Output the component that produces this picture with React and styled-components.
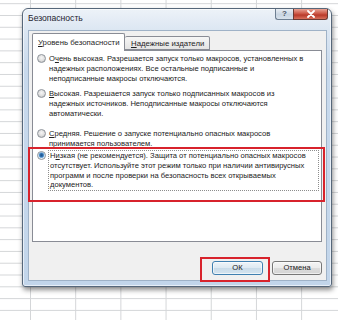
import React from "react";
import styled, { createGlobalStyle } from "styled-components";

const GlobalStyle = createGlobalStyle`
  html, body {
    margin: 0;
    padding: 0;
    overflow: hidden;
  }
  body {
    font-family: "Liberation Sans", Arial, sans-serif;
    color: #1f1f1f;
  }
`;

const options = [
  {
    key: "veryhigh",
    mt: 3,
    lines: [
      [["О"], ["ч", true], ["ень высокая. Разрешается запуск только макросов, установленных в"]],
      [["надежных расположениях. Все остальные подписанные и"]],
      [["неподписанные макросы отключаются."]],
    ],
  },
  {
    key: "high",
    mt: 5.7,
    lines: [
      [["В", true], ["ысокая. Разрешается запуск только подписанных макросов из"]],
      [["надежных источников. Неподписанные макросы отключаются"]],
      [["автоматически."]],
    ],
  },
  {
    key: "medium",
    mt: 10.6,
    lines: [
      [["С", true], ["редняя. Решение о запуске потенциально опасных макросов"]],
      [["принимается пользователем."]],
    ],
  },
  {
    key: "low",
    mt: 1.3,
    checked: true,
    marked: true,
    lines: [
      [["Н"], ["и", true], ["зкая (не рекомендуется). Защита от потенциально опасных макросов"]],
      [["отсутствует. Используйте этот режим только при наличии антивирусных"]],
      [["программ и после проверки на безопасность всех открываемых"]],
      [["документов."]],
    ],
  },
];

const App = () => {
  return (
    <Page>
      <GlobalStyle />
      <Dialog>
        <TitleBar>
          <Title>Безопасность</Title>
          <Controls>
            <HelpButton>?</HelpButton>
            <CloseButton>
              <svg width="10" height="8" viewBox="0 0 10 8">
                <path
                  d="M2 1 L8 7 M8 1 L2 7"
                  stroke="#fff"
                  strokeWidth="1.8"
                  strokeLinecap="round"
                />
              </svg>
            </CloseButton>
          </Controls>
        </TitleBar>
        <Client>
          <TabRow>
            <Tab $active>
              <u>У</u>ровень безопасности
            </Tab>
            <Tab>
              <u>Н</u>адежные издатели
            </Tab>
          </TabRow>
          <Panel>
            {options.map((opt) => (
              <Option key={opt.key} $mt={opt.mt}>
                <Radio $checked={opt.checked} />
                <Label $focused={opt.checked}>
                  {opt.lines.map((line, i) => (
                    <Line key={i}>
                      {line.map(([t, u], j) => (u ? <u key={j}>{t}</u> : <span key={j}>{t}</span>))}
                    </Line>
                  ))}
                </Label>
                {opt.marked && <Mark />}
              </Option>
            ))}
          </Panel>
          <ButtonRow>
            <Marked>
              <Button $default>ОК</Button>
              <ButtonMark />
            </Marked>
            <Button>Отмена</Button>
          </ButtonRow>
        </Client>
      </Dialog>
    </Page>
  );
};

const Page = styled.div`
  width: 338px;
  height: 320px;
  box-sizing: border-box;
  padding: 8px 0 0 22px;
  background-color: #fff;
  background-image: linear-gradient(to right, #d4d6d8 1px, transparent 1px),
    linear-gradient(to bottom, #d4d6d8 1px, transparent 1px);
  background-size: 45.2px 11.8px;
  background-position: 30px 3.2px;
`;

const Dialog = styled.div`
  width: 310px;
  height: 279px;
  box-sizing: border-box;
  display: flex;
  flex-direction: column;
  border: 1px solid #56677a;
  border-radius: 6px 6px 3px 3px;
  padding: 0 4px 5px 5px;
  background: linear-gradient(to bottom, #edf2f8 0px, #dbe6f2 22px, #c8d9ec 60px, #c2d5ea 100%);
  box-shadow: 1px 3px 5px rgba(0, 0, 0, 0.45), inset 0 0 0 1px rgba(255, 255, 255, 0.6);
`;

const TitleBar = styled.div`
  height: 21px;
  display: flex;
  align-items: flex-start;
  justify-content: space-between;
`;

const Title = styled.div`
  font-size: 8.6px;
  line-height: 9px;
  margin-top: 5px;
  color: #1e2530;
`;

const Controls = styled.div`
  display: flex;
  margin-right: -1px;
`;

const HelpButton = styled.div`
  width: 18px;
  height: 11px;
  box-sizing: border-box;
  border: 1px solid #6e7f92;
  border-top: none;
  border-right: none;
  border-radius: 0 0 0 3px;
  background: linear-gradient(to bottom, #e9eef4, #c9d5e2 55%, #d8e2ec);
  font-size: 8px;
  line-height: 10px;
  text-align: center;
  color: #4a5564;
  font-weight: bold;
`;

const CloseButton = styled.div`
  width: 35px;
  height: 11px;
  box-sizing: border-box;
  border: 1px solid #6b3a34;
  border-top: none;
  border-radius: 0 0 3px 0;
  background: linear-gradient(to bottom, #e9a495, #c9503f 50%, #b8392a 60%, #d8705c);
  display: flex;
  align-items: center;
  justify-content: center;
`;

const Client = styled.div`
  flex: 1;
  display: flex;
  flex-direction: column;
  background: #f0f0f0;
  border: 1px solid #9fb2c7;
  box-sizing: border-box;
  padding: 2px 4px 0 3px;
`;

const TabRow = styled.div`
  display: flex;
  align-items: flex-end;
  height: 17px;
`;

const Tab = styled.div`
  height: ${(p) => (p.$active ? 18 : 14)}px;
  box-sizing: border-box;
  border: 1px solid #898c95;
  border-bottom: ${(p) => (p.$active ? "none" : "1px solid #898c95")};
  border-left: ${(p) => (p.$active ? "1px solid #898c95" : "none")};
  border-radius: 2px 2px 0 0;
  background: ${(p) =>
    p.$active ? "#fff" : "linear-gradient(to bottom, #f6f6f6, #e4e4e4)"};
  padding: ${(p) => (p.$active ? "4px 6px 0 5px" : "2px 6px 0 6px")};
  width: ${(p) => (p.$active ? 93 : 85)}px;
  font-size: 7.8px;
  line-height: 10px;
  white-space: nowrap;
  position: relative;
  z-index: ${(p) => (p.$active ? 1 : 0)};
  margin-bottom: ${(p) => (p.$active ? -1 : 0)}px;
`;

const Panel = styled.div`
  height: 192px;
  box-sizing: border-box;
  background: #fff;
  border: 1px solid #898c95;
  display: flex;
  flex-direction: column;
`;

const Option = styled.div`
  position: relative;
  display: flex;
  align-items: flex-start;
  padding-left: 4px;
  margin-top: ${(p) => p.$mt}px;
`;

const Radio = styled.div`
  width: 9px;
  height: 9px;
  box-sizing: border-box;
  border-radius: 50%;
  border: 1px solid #8e949b;
  margin-top: ${(p) => (p.$checked ? 1.5 : 0.4)}px;
  flex-shrink: 0;
  background: ${(p) =>
    p.$checked
      ? "radial-gradient(circle at 50% 45%, #1d4f86 0, #2d6fb0 1.6px, #7fb3de 2.6px, #e6eef6 3.2px)"
      : "radial-gradient(circle at 50% 40%, #f6f6f6 0, #dedede 3px, #c8c8c8 4px)"};
`;

const Label = styled.div`
  margin-left: ${(p) => (p.$focused ? 2 : 3)}px;
  padding: ${(p) => (p.$focused ? "0 4px 0 1px" : "0")};
  border: ${(p) => (p.$focused ? "1px dotted #8d8d8d" : "none")};
  width: ${(p) => (p.$focused ? "264px" : "auto")};
  font-size: 7.6px;
  line-height: 9.8px;
  color: #222;
`;

const Line = styled.div`
  white-space: nowrap;
`;

const Mark = styled.div`
  position: absolute;
  left: -5px;
  right: -4px;
  top: -3px;
  bottom: -11px;
  border: 2px solid #d8232c;
  pointer-events: none;
`;

const ButtonRow = styled.div`
  display: flex;
  justify-content: flex-end;
  gap: 9px;
  margin-top: 19px;
`;

const Marked = styled.div`
  position: relative;
  display: flex;
`;

const ButtonMark = styled.div`
  position: absolute;
  left: -12px;
  right: -7px;
  top: -4px;
  bottom: -7px;
  border: 2px solid #d8232c;
  pointer-events: none;
`;

const Button = styled.div`
  width: ${(p) => (p.$default ? 51 : 50)}px;
  height: 14px;
  box-sizing: border-box;
  border: 1px solid ${(p) => (p.$default ? "#3f7fb0" : "#777")};
  border-radius: 3px;
  background: ${(p) =>
    p.$default
      ? "linear-gradient(to bottom, #eef4f9, #dde9f2 50%, #c9dbe9 51%, #d4e4ef)"
      : "linear-gradient(to bottom, #f4f4f4, #ebebeb 50%, #dcdcdc 51%, #d4d4d4)"};
  box-shadow: inset 0 0 0 1px rgba(255, 255, 255, 0.6);
  font-size: 7.6px;
  line-height: 12px;
  text-align: center;
  color: #222;
`;

export default App;
